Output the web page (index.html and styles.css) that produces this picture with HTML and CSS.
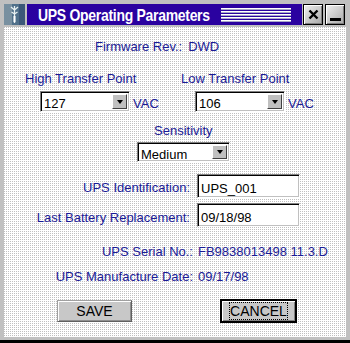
FILE: index.html
```html
<!DOCTYPE html>
<html>
<head>
<meta charset="utf-8">
<link rel="stylesheet" href="styles.css">
</head>
<body>
<div class="window">
  <div class="titlerow">
    <div class="appicon">
      <svg width="21" height="21" viewBox="0 0 21 21">
        <rect width="21" height="21" fill="#50708a"/>
        <rect x="0" y="0" width="8" height="21" fill="#7890a0"/>
        <rect x="15" y="0" width="6" height="21" fill="#3c5878"/>
        <path d="M10.5 2 L10.5 19 M10.5 6 L7 3 M10.5 6 L14 3 M10.5 10 L7.5 8 M10.5 10 L13.5 8" stroke="#e8f0f0" stroke-width="1.3" fill="none"/>
        <rect x="9.5" y="12" width="2" height="6" fill="#ffffff"/>
      </svg>
    </div>
    <div class="titlebar">
      <span class="title">UPS Operating Parameters</span>
      <div class="grip"></div>
    </div>
    <div class="tbtn close">
      <svg width="11" height="11" viewBox="0 0 11 11"><path d="M1.5 1.5 L9.5 9.5 M9.5 1.5 L1.5 9.5" stroke="#000" stroke-width="2.4"/></svg>
    </div>
    <div class="tbtn min"><span class="minbar"></span></div>
  </div>

  <div class="client">
    <div class="firmware">
      <span class="lbl">Firmware Rev.:</span>
      <span class="lbl">DWD</span>
    </div>

    <div class="pair labels">
      <span class="lbl">High Transfer Point</span>
      <span class="lbl">Low Transfer Point</span>
    </div>

    <div class="pair selects">
      <div class="cell">
        <div class="combo w90"><span class="val">127</span><span class="drop"></span></div>
        <span class="lbl unit">VAC</span>
      </div>
      <div class="cell">
        <div class="combo w90"><span class="val">106</span><span class="drop"></span></div>
        <span class="lbl unit">VAC</span>
      </div>
    </div>

    <div class="sens-label"><span class="lbl">Sensitivity</span></div>
    <div class="sens-select">
      <div class="combo w93"><span class="val">Medium</span><span class="drop"></span></div>
    </div>

    <div class="frow first">
      <span class="lbl">UPS Identification:</span>
      <div class="field">UPS_001</div>
    </div>
    <div class="frow second">
      <span class="lbl">Last Battery Replacement:</span>
      <div class="field">09/18/98</div>
    </div>

    <div class="irow serial">
      <span class="lbl">UPS Serial No.:</span>
      <span class="lbl">FB9838013498 11.3.D</span>
    </div>
    <div class="irow mfg">
      <span class="lbl">UPS Manufacture Date:</span>
      <span class="lbl">09/17/98</span>
    </div>

    <div class="buttons">
      <div class="btn save">SAVE</div>
      <div class="btn cancel"><span class="focus">CANCEL</span></div>
    </div>
  </div>
</div>
</body>
</html>
```

FILE: styles.css
```css
* { box-sizing: border-box; }
html, body { margin: 0; padding: 0; }
body {
  width: 350px;
  height: 343px;
  overflow: hidden;
  font-family: "Liberation Sans", Arial, sans-serif;
  font-size: 13px;
  background: #c0c0c0;
}
.window {
  width: 350px;
  height: 343px;
  background: #c0c0c0;
  padding: 4px 4px 3px 4px;
  border-bottom: 3px solid #000;
  display: flex;
  flex-direction: column;
}
.titlerow {
  display: flex;
  height: 21px;
  margin-bottom: 2px;
  flex: none;
}
.appicon {
  width: 21px;
  height: 21px;
  margin-right: 2px;
}
.appicon svg { display: block; }
.titlebar {
  width: 275px;
  height: 21px;
  margin-right: 1px;
  background: #2a02a0;
  display: flex;
  align-items: flex-start;
  padding: 0 11px;
  justify-content: space-between;
}
.title {
  color: #fff;
  font-weight: bold;
  font-size: 14px;
  letter-spacing: -0.3px;
  line-height: 21px;
  display: inline-block;
  transform: scaleY(1.15);
  padding-top: 1px;
}
.grip {
  width: 70px;
  height: 15px;
  margin-top: 4px;
  background: repeating-linear-gradient(to bottom, #ffffff 0 1px, #a8a8c8 1px 2px, transparent 2px 3px);
}
.tbtn {
  width: 20px;
  height: 21px;
  border: 1px solid #000;
  box-shadow: inset 1px 1px #fff, inset -1px -1px #808080;
  background: linear-gradient(135deg, #f0f0f0, #a8a8a8);
  display: flex;
  align-items: center;
  justify-content: center;
}
.close { margin-right: 2px; }
.min { align-items: flex-end; padding-bottom: 3px; }
.minbar {
  display: block;
  width: 11px;
  height: 3px;
  background: #000;
}

.client {
  flex: 1;
  display: flex;
  flex-direction: column;
  background-color: #c0c0c0;
  background-image:
    linear-gradient(to right, transparent 1px, #fff 1px),
    linear-gradient(to bottom, transparent 1px, #fff 1px);
  background-size: 2px 2px;
  padding-top: 12px;
}
.lbl {
  color: #1a1a96;
  line-height: 15px;
  white-space: nowrap;
}

.firmware {
  display: flex;
  gap: 6px;
  margin-left: 91px;
}
.pair {
  display: grid;
  grid-template-columns: 156px auto;
}
.labels {
  margin-top: 17px;
  padding-left: 21px;
}
.selects {
  margin-top: 5px;
  padding-left: 36px;
  grid-template-columns: 155px auto;
}
.cell {
  display: flex;
  align-items: flex-start;
}
.unit {
  margin-left: 3px;
  padding-top: 5px;
}
.combo {
  display: flex;
  height: 21px;
  background: #fff;
  border: 1px solid;
  border-color: #808080 #fff #fff #808080;
  box-shadow: inset 1px 1px #000, inset -1px -1px #c0c0c0;
  padding: 2px 2px 2px 2px;
}
.w90 { width: 90px; }
.w93 { width: 93px; }
.val {
  flex: 1;
  color: #000;
  line-height: 15px;
  padding-top: 2px;
  padding-left: 1px;
  white-space: nowrap;
}
.drop {
  width: 15px;
  background: #c0c0c0;
  border: 1px solid;
  border-color: #fff #404040 #404040 #fff;
  display: flex;
  align-items: center;
  justify-content: center;
}
.drop::after {
  content: "";
  border-left: 3px solid transparent;
  border-right: 3px solid transparent;
  border-top: 4px solid #000;
}
.sens-label {
  margin-top: 11px;
  margin-left: 150px;
}
.sens-select {
  margin-top: 4px;
  margin-left: 133px;
}
.sens-select .combo { height: 20px; }

.frow {
  display: grid;
  grid-template-columns: 186px 103px;
  column-gap: 7px;
  align-items: start;
}
.frow .lbl { text-align: right; }
.frow.first { margin-top: 12px; }
.frow.first .lbl { margin-top: 6px; }
.frow.second { margin-top: 5px; }
.frow.second .lbl { margin-top: 7px; }
.field {
  height: 24px;
  background: #fff;
  border: 1px solid;
  border-color: #808080 #fff #fff #808080;
  box-shadow: inset 1px 1px #000, inset -1px -1px #c0c0c0;
  padding: 6px 3px 0 3px;
  line-height: 15px;
  color: #000;
}

.irow {
  display: grid;
  grid-template-columns: 189px auto;
  column-gap: 5px;
}
.irow .lbl:first-child { text-align: right; }
.irow.serial { margin-top: 17px; }
.irow.mfg { margin-top: 10px; }

.buttons {
  display: flex;
  align-items: center;
  margin-top: 15px;
  padding-left: 53px;
  height: 24px;
}
.btn {
  height: 22px;
  background: #c8c8c8;
  color: #000;
  display: flex;
  align-items: center;
  justify-content: center;
  font-size: 14px;
  line-height: 15px;
}
.save {
  width: 75px;
  border: 1px solid;
  border-color: #a0a0a0 #606060 #606060 #a0a0a0;
  box-shadow: inset 1px 1px #fff, inset -1px -1px #909090;
}
.cancel {
  width: 77px;
  height: 24px;
  margin-left: 88px;
  border: 2px solid #000;
  box-shadow: inset 1px 1px #fff, inset -1px -1px #808080;
}
.focus {
  border: 1px dotted #000;
  padding: 1px 0 0 0;
  line-height: 15px;
}
```
